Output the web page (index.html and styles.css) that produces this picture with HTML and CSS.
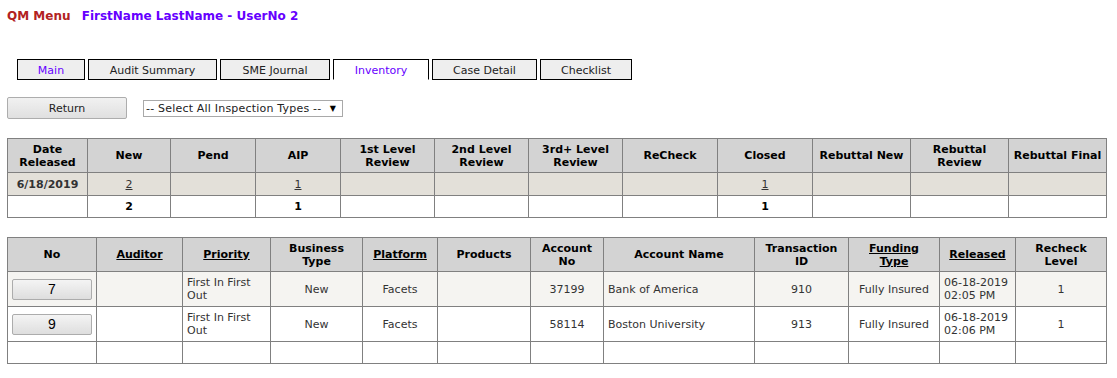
FILE: index.html
```html
<!DOCTYPE html>
<html lang="en">
<head>
  <meta charset="UTF-8" />
  <title>QM Inventory</title>
  <link rel="stylesheet" href="styles.css">
</head>
<body>

<!-- Title -->
<div class="page-title">
  <span class="menu-name">QM Menu</span>
  <span class="user-name">FirstName LastName - UserNo 2</span>
</div>

<!-- Tabs -->
<nav class="tab-bar">
  <a href="#" class="tab tab-main">Main</a>
  <a href="#" class="tab tab-audit">Audit Summary</a>
  <a href="#" class="tab tab-sme">SME Journal</a>
  <a href="#" class="tab tab-inventory tab-active">Inventory</a>
  <a href="#" class="tab tab-case">Case Detail</a>
  <a href="#" class="tab tab-check">Checklist</a>
</nav>

<!-- Toolbar -->
<div class="toolbar">
  <button class="return-btn">Return</button>
  <div class="select-box">
    <select>
      <option>-- Select All Inspection Types --</option>
    </select>
    <span class="select-arrow">▼</span>
  </div>
</div>

<!-- Summary by date -->
<table class="grid summary-grid">
  <colgroup>
    <col><col><col><col><col><col><col><col><col><col><col><col>
  </colgroup>
  <tr class="head-row">
    <th>Date<br>Released</th>
    <th>New</th>
    <th>Pend</th>
    <th>AIP</th>
    <th>1st Level<br>Review</th>
    <th>2nd Level<br>Review</th>
    <th>3rd+ Level<br>Review</th>
    <th>ReCheck</th>
    <th>Closed</th>
    <th>Rebuttal New</th>
    <th>Rebuttal<br>Review</th>
    <th>Rebuttal Final</th>
  </tr>
  <tr class="date-row">
    <td class="bold">6/18/2019</td>
    <td><a href="#">2</a></td>
    <td></td>
    <td><a href="#">1</a></td>
    <td></td>
    <td></td>
    <td></td>
    <td></td>
    <td><a href="#">1</a></td>
    <td></td>
    <td></td>
    <td></td>
  </tr>
  <tr class="total-row">
    <td></td>
    <td>2</td>
    <td></td>
    <td>1</td>
    <td></td>
    <td></td>
    <td></td>
    <td></td>
    <td>1</td>
    <td></td>
    <td></td>
    <td></td>
  </tr>
</table>

<!-- Cases -->
<table class="grid case-grid">
  <colgroup>
    <col><col><col><col><col><col><col><col><col><col><col><col>
  </colgroup>
  <tr class="head-row">
    <th>No</th>
    <th><a href="#">Auditor</a></th>
    <th><a href="#">Priority</a></th>
    <th>Business<br>Type</th>
    <th><a href="#">Platform</a></th>
    <th>Products</th>
    <th>Account<br>No</th>
    <th>Account Name</th>
    <th>Transaction<br>ID</th>
    <th><a href="#">Funding<br>Type</a></th>
    <th><a href="#">Released</a></th>
    <th>Recheck<br>Level</th>
  </tr>
  <tr class="case-row case-row-alt">
    <td><button class="case-btn">7</button></td>
    <td></td>
    <td class="left">First In First<br>Out</td>
    <td>New</td>
    <td>Facets</td>
    <td></td>
    <td>37199</td>
    <td class="left">Bank of America</td>
    <td>910</td>
    <td>Fully Insured</td>
    <td class="left">06-18-2019<br>02:05 PM</td>
    <td>1</td>
  </tr>
  <tr class="case-row">
    <td><button class="case-btn">9</button></td>
    <td></td>
    <td class="left">First In First<br>Out</td>
    <td>New</td>
    <td>Facets</td>
    <td></td>
    <td>58114</td>
    <td class="left">Boston University</td>
    <td>913</td>
    <td>Fully Insured</td>
    <td class="left">06-18-2019<br>02:06 PM</td>
    <td>1</td>
  </tr>
  <tr class="empty-row">
    <td></td><td></td><td></td><td></td><td></td><td></td>
    <td></td><td></td><td></td><td></td><td></td><td></td>
  </tr>
</table>

</body>
</html>
```

FILE: styles.css
```css
body {
  margin: 0;
  padding: 7px;
  font-family: "DejaVu Sans", Verdana, sans-serif;
  font-size: 11px;
  color: #333;
  background: #fff;
}

/* Title line */
.page-title {
  margin-top: 2px;
  font-size: 12px;
  font-weight: bold;
  line-height: 15px;
}

.menu-name {
  color: #b22222;
}

.user-name {
  color: #6600ff;
  margin-left: 7px;
}

/* Tabs */
.tab-bar {
  display: flex;
  gap: 3px;
  margin: 35px 0 0 10px;
}

.tab {
  box-sizing: border-box;
  height: 21px;
  padding-top: 3px;
  line-height: 16px;
  border: 1px solid #000;
  background: #eee;
  color: #222;
  text-align: center;
  text-decoration: none;
}

.tab-main { width: 68px; color: #6600ff; }
.tab-audit { width: 129px; }
.tab-sme { width: 110px; }
.tab-inventory { width: 96px; }
.tab-case { width: 105px; }
.tab-check { width: 92px; }

.tab-active {
  background: #fff;
  border-bottom-color: #fff;
  color: #6600ff;
}

/* Return + select */
.toolbar {
  display: flex;
  align-items: center;
  gap: 16px;
  margin-top: 17px;
}

.return-btn {
  box-sizing: border-box;
  width: 120px;
  height: 22px;
  padding: 1px 0 0;
  font-family: inherit;
  font-size: 11px;
  color: #222;
  border: 1px solid #adadad;
  border-radius: 2px;
  background: linear-gradient(#f1f1f1, #e0e0e0);
}

.select-box {
  box-sizing: border-box;
  display: flex;
  align-items: center;
  width: 200px;
  height: 17px;
  padding: 0 6px 0 2px;
  border: 1px solid #a9a9a9;
}

.select-box select {
  flex: 1;
  appearance: none;
  border: none;
  background: none;
  padding: 0;
  font-family: inherit;
  font-size: 11px;
  letter-spacing: 0.2px;
  color: #222;
  outline: none;
}

.select-arrow {
  font-size: 8px;
  color: #000;
}

/* Grids */
.grid {
  width: 1100px;
  table-layout: fixed;
  border-collapse: collapse;
  font-size: 11px;
  line-height: 13px;
}

.grid th,
.grid td {
  border: 1px solid #808080;
  padding: 0 4px;
  text-align: center;
  vertical-align: middle;
}

.grid th {
  background: #d3d3d3;
  color: #000;
  font-weight: bold;
}

.grid a {
  color: inherit;
}

.grid .left {
  text-align: left;
}

.grid .bold {
  font-weight: bold;
}

.head-row {
  height: 34px;
}

.summary-grid {
  margin-top: 19px;
}

.summary-grid col:nth-child(1) { width: 80px; }
.summary-grid col:nth-child(2) { width: 83px; }
.summary-grid col:nth-child(3) { width: 85px; }
.summary-grid col:nth-child(4) { width: 85px; }
.summary-grid col:nth-child(5) { width: 94px; }
.summary-grid col:nth-child(6) { width: 94px; }
.summary-grid col:nth-child(7) { width: 94px; }
.summary-grid col:nth-child(8) { width: 95px; }
.summary-grid col:nth-child(9) { width: 95px; }
.summary-grid col:nth-child(10) { width: 98px; }
.summary-grid col:nth-child(11) { width: 98px; }
.summary-grid col:nth-child(12) { width: 98px; }

.date-row {
  height: 23px;
  background: #e3e0d9;
}

.total-row {
  height: 22px;
  font-weight: bold;
  color: #000;
}

.case-grid {
  margin-top: 19px;
}

.case-grid col:nth-child(1) { width: 89px; }
.case-grid col:nth-child(2) { width: 86px; }
.case-grid col:nth-child(3) { width: 88px; }
.case-grid col:nth-child(4) { width: 92px; }
.case-grid col:nth-child(5) { width: 75px; }
.case-grid col:nth-child(6) { width: 93px; }
.case-grid col:nth-child(7) { width: 73px; }
.case-grid col:nth-child(8) { width: 151px; }
.case-grid col:nth-child(9) { width: 94px; }
.case-grid col:nth-child(10) { width: 91px; }
.case-grid col:nth-child(11) { width: 76px; }
.case-grid col:nth-child(12) { width: 91px; }

.case-row {
  height: 35px;
}

.case-row-alt {
  background: #f5f4f1;
}

.empty-row {
  height: 22px;
}

.case-btn {
  box-sizing: border-box;
  width: 80px;
  height: 21px;
  padding: 0;
  font-family: "Liberation Sans", Arial, sans-serif;
  font-size: 14px;
  color: #000;
  border: 1px solid #acacac;
  border-radius: 2px;
  background: linear-gradient(#f4f4f4, #dedede);
}
```
